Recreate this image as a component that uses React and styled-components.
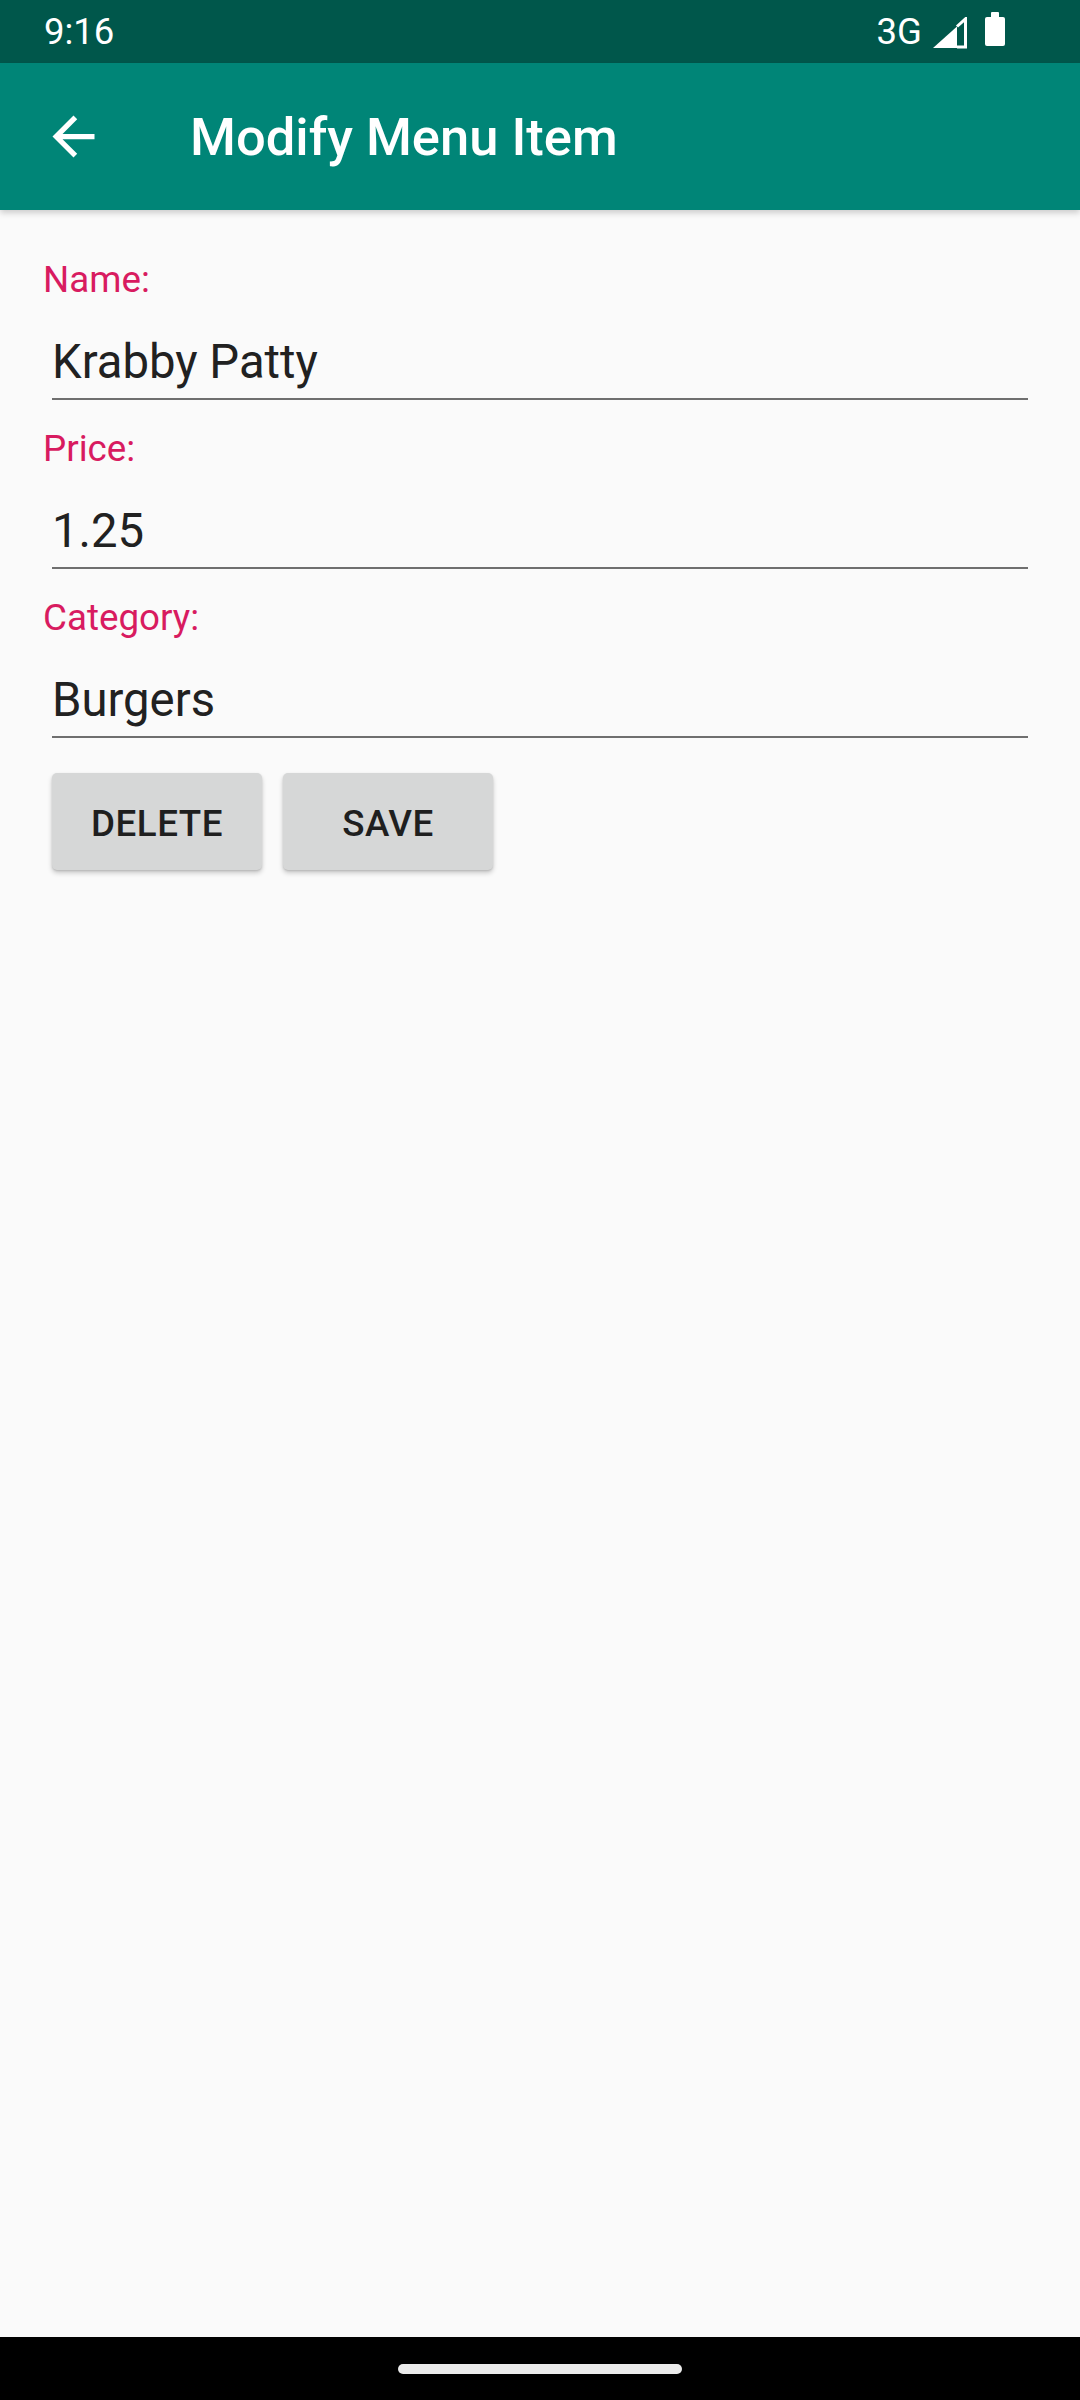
import React from 'react';
import styled, { createGlobalStyle } from 'styled-components';

const fields = [
  { label: 'Name:', value: 'Krabby Patty' },
  { label: 'Price:', value: '1.25' },
  { label: 'Category:', value: 'Burgers' }
];

const GlobalStyle = createGlobalStyle`
  html, body {
    margin: 0;
    padding: 0;
    background: #fafafa;
  }
  body {
    font-family: Roboto, 'Noto Sans', sans-serif;
  }
`;

const Screen = styled.div`
  width: 1080px;
  height: 2400px;
  display: flex;
  flex-direction: column;
  background: #fafafa;
  overflow: hidden;
`;

const StatusBar = styled.div`
  height: 63px;
  flex: none;
  background: #00574b;
  color: #fff;
  display: flex;
  align-items: center;
  justify-content: space-between;
  padding: 0 75px 0 44px;
  font-size: 36.5px;
  line-height: 63px;
`;

const StatusIcons = styled.div`
  display: flex;
  align-items: center;
`;

const NetLabel = styled.span`
  font-size: 36.5px;
  margin-right: 11px;
`;

const Signal = styled.svg`
  width: 34px;
  height: 32px;
  margin-right: 18px;
  margin-top: 3px;
`;

const Battery = styled.svg`
  width: 20px;
  height: 34px;
  margin-top: -5px;
`;

const AppBar = styled.div`
  height: 147px;
  flex: none;
  background: #008577;
  display: flex;
  align-items: center;
  padding-left: 42px;
  gap: 85px;
  box-shadow: 0 3px 6px rgba(0, 0, 0, 0.18);
  position: relative;
  z-index: 1;
`;

const BackIcon = styled.svg`
  width: 63px;
  height: 63px;
  flex: none;
`;

const Title = styled.h1`
  margin: 0;
  color: #fff;
  font-size: 52.5px;
  font-weight: 500;
  line-height: 62px;
`;

const Form = styled.div`
  flex: 1;
  display: flex;
  flex-direction: column;
  gap: 27px;
  padding-top: 48px;
`;

const Field = styled.div`
  display: flex;
  flex-direction: column;
`;

const Label = styled.label`
  margin-left: 43px;
  color: #d81b60;
  font-size: 36.75px;
  line-height: 43px;
`;

const Value = styled.div`
  margin: 34px 52px 0;
  padding: 0 0 8px;
  color: #212121;
  font-size: 47.25px;
  line-height: 55px;
  border-bottom: 2px solid #6f6f6f;
`;

const Buttons = styled.div`
  display: flex;
  gap: 21px;
  margin: 8px 0 0 52px;
`;

const Button = styled.button`
  width: 210px;
  height: 97px;
  border: none;
  border-radius: 5px;
  background: #d6d7d7;
  color: #1f1f1f;
  font-family: Roboto, sans-serif;
  font-size: 36.75px;
  font-weight: 500;
  letter-spacing: 0.5px;
  padding: 3px 0 0;
  box-shadow: 0 3px 5px rgba(0, 0, 0, 0.2), 0 1px 2px rgba(0, 0, 0, 0.12);
`;

const NavBar = styled.div`
  height: 63px;
  flex: none;
  background: #000;
  display: flex;
  align-items: center;
  justify-content: center;
`;

const Handle = styled.div`
  width: 284px;
  height: 10px;
  border-radius: 5px;
  background: #ebebeb;
`;

export default function App() {
  return (
    <>
      <GlobalStyle />
      <Screen>
        <StatusBar>
          <span>9:16</span>
          <StatusIcons>
            <NetLabel>3G</NetLabel>
            <Signal viewBox="0 0 34 32">
              <polygon points="0,31 24,31 24,9.5" fill="#fff" />
              <polyline
                points="24,9.5 32.5,1.8 32.5,30 24,30"
                fill="none"
                stroke="#fff"
                strokeWidth="3"
              />
            </Signal>
            <Battery viewBox="0 0 20 34">
              <rect x="6" y="0" width="8" height="6" rx="1" fill="#fff" />
              <rect x="0" y="5" width="20" height="29" rx="2" fill="#fff" />
            </Battery>
          </StatusIcons>
        </StatusBar>
        <AppBar>
          <BackIcon viewBox="0 0 24 24">
            <path fill="#fff" d="M20 11H7.83l5.59-5.59L12 4l-8 8 8 8 1.41-1.41L7.83 13H20v-2z" />
          </BackIcon>
          <Title>Modify Menu Item</Title>
        </AppBar>
        <Form>
          {fields.map((f) => (
            <Field key={f.label}>
              <Label>{f.label}</Label>
              <Value>{f.value}</Value>
            </Field>
          ))}
          <Buttons>
            <Button>DELETE</Button>
            <Button>SAVE</Button>
          </Buttons>
        </Form>
        <NavBar>
          <Handle />
        </NavBar>
      </Screen>
    </>
  );
}
